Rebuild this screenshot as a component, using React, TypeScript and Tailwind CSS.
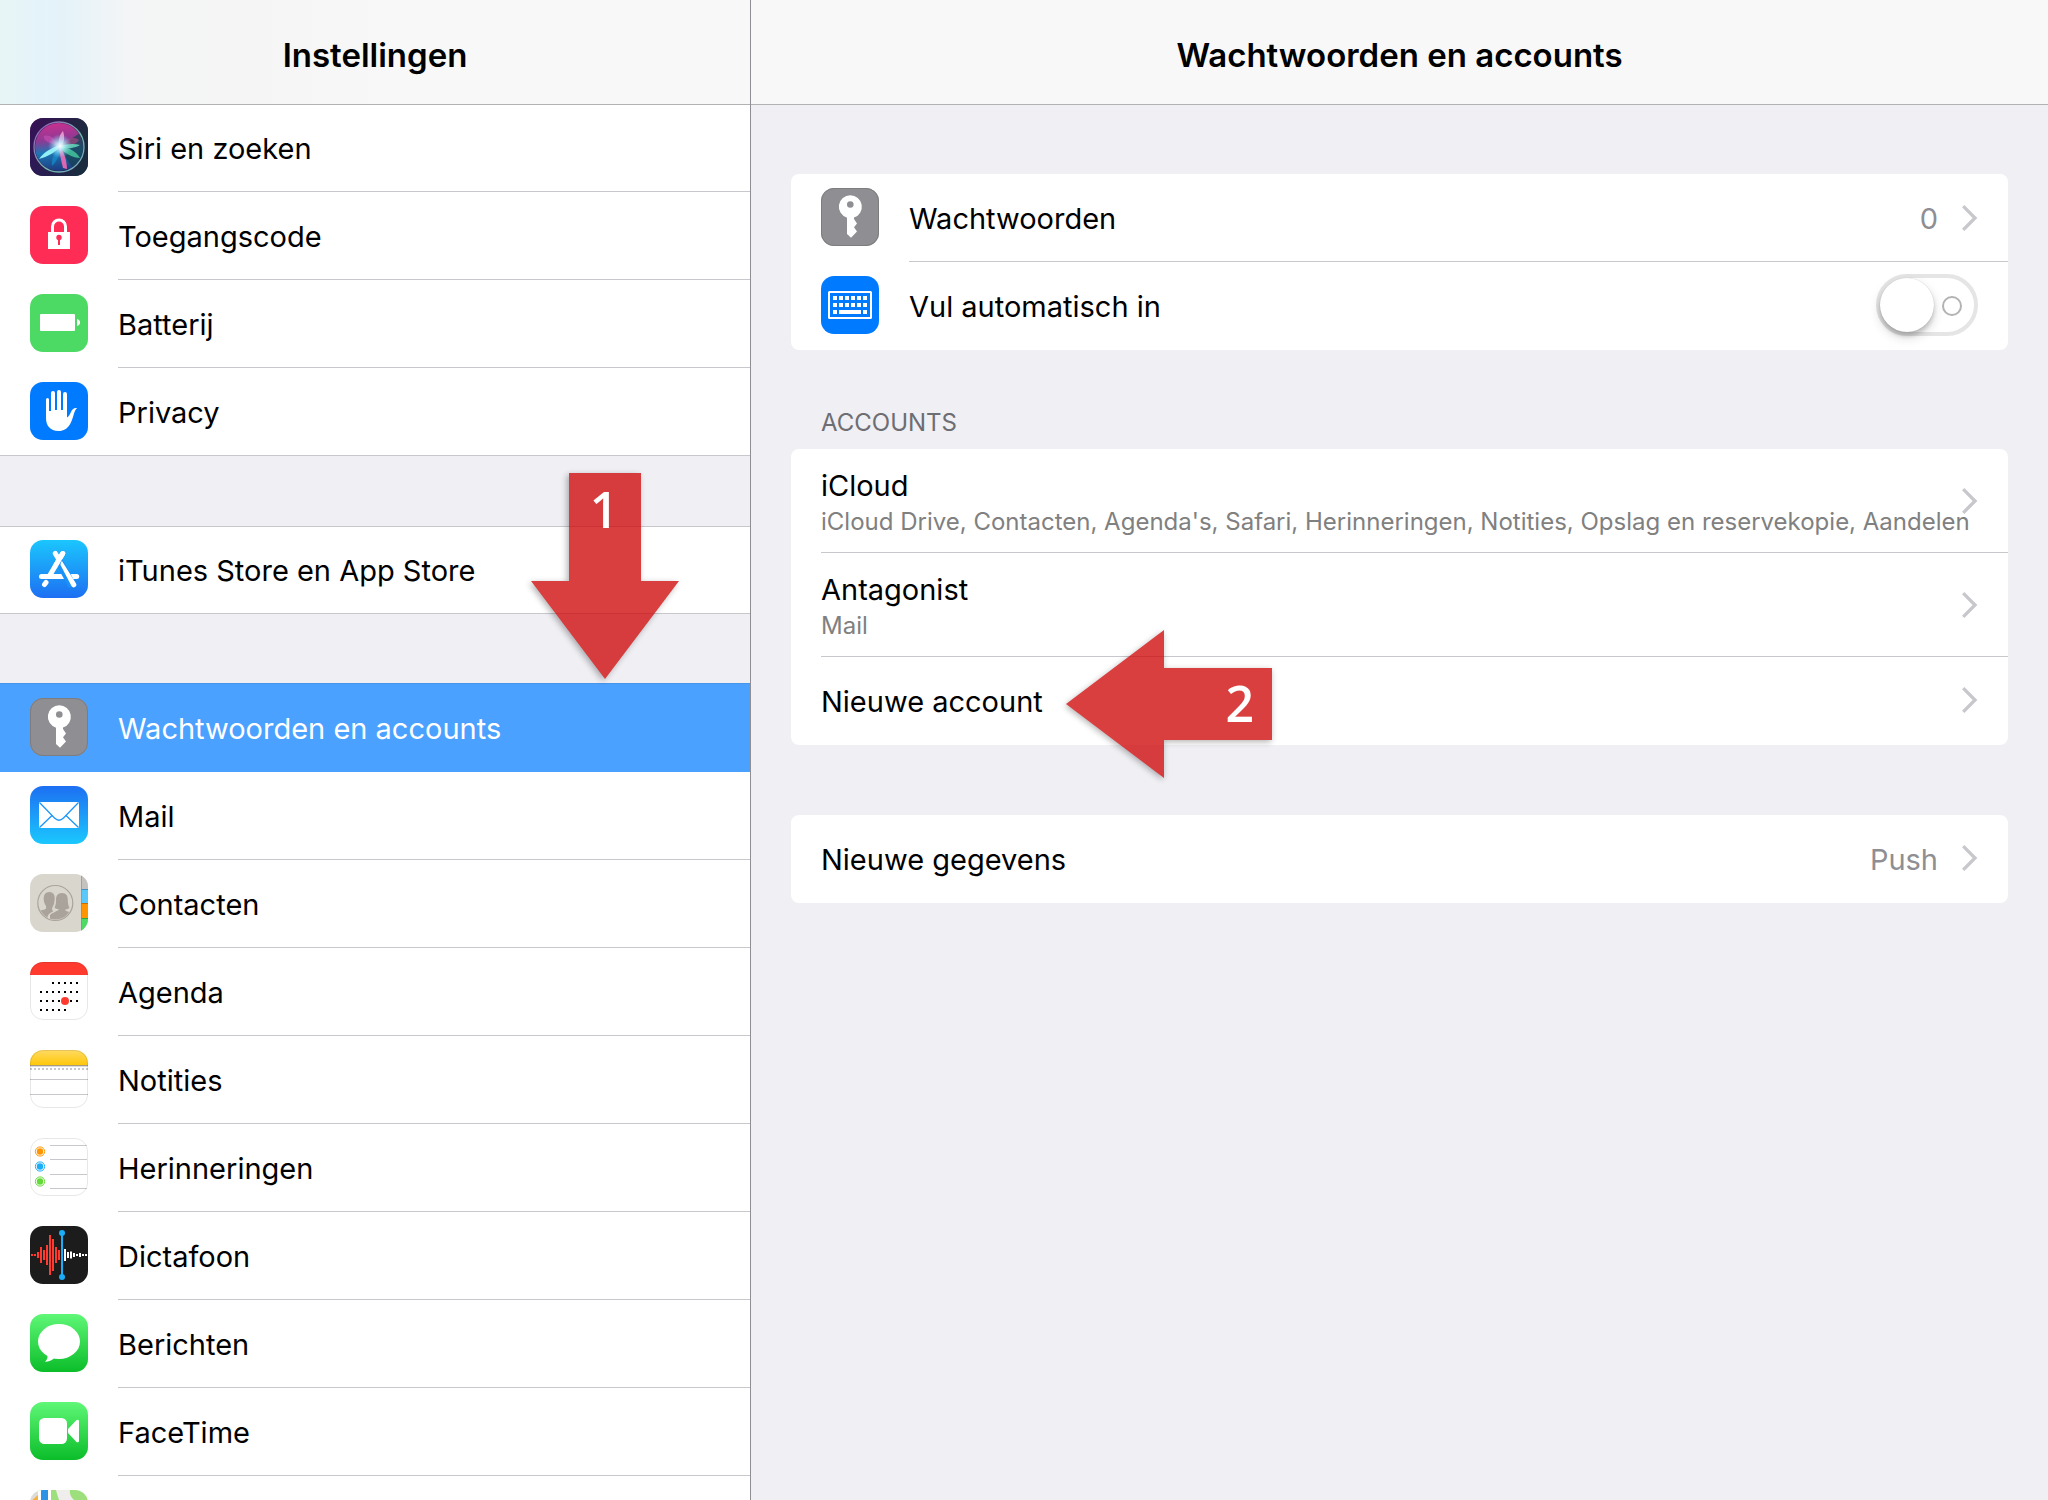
import { useId, useState } from "react";
import type { ReactNode } from "react";

interface TileProps {
  from: string;
  to?: string;
  outline?: string;
  children?: ReactNode;
}

// Rounded 58px app tile, everything drawn inside is clipped to its corners
const Tile: React.FC<TileProps> = ({ from, to = from, outline, children }) => {
  const id = useId();

  return (
    <svg viewBox="0 0 58 58" className="size-[58px] shrink-0" aria-hidden="true">
      <defs>
        <linearGradient id={`${id}-bg`} x1="0" y1="0" x2="0" y2="1">
          <stop offset="0" stopColor={from} />
          <stop offset="1" stopColor={to} />
        </linearGradient>
        <clipPath id={`${id}-clip`}>
          <rect width="58" height="58" rx="13" />
        </clipPath>
      </defs>
      <g clipPath={`url(#${id}-clip)`}>
        <rect width="58" height="58" fill={`url(#${id}-bg)`} />
        {children}
      </g>
      {outline && (
        <rect x="0.5" y="0.5" width="57" height="57" rx="12.5" fill="none" stroke={outline} />
      )}
    </svg>
  );
};

const SiriIcon = () => (
  <Tile from="#2f1547" to="#152a55">
    <defs>
      <linearGradient id="siri-shade" x1="0" y1="0" x2="1" y2="0.2">
        <stop offset="0" stopColor="#3b0f5c" stopOpacity="0.7" />
        <stop offset="1" stopColor="#1a2c3c" stopOpacity="0.9" />
      </linearGradient>
      <linearGradient id="siri-orb" x1="0.4" y1="0" x2="0.5" y2="1">
        <stop offset="0" stopColor="#c8308f" />
        <stop offset="0.35" stopColor="#8d3a94" />
        <stop offset="0.6" stopColor="#1c76b4" />
        <stop offset="1" stopColor="#1d3a80" />
      </linearGradient>
      <radialGradient id="siri-glow">
        <stop offset="0" stopColor="#fff" />
        <stop offset="0.3" stopColor="#c9f4ff" stopOpacity="0.85" />
        <stop offset="1" stopColor="#7fd6f5" stopOpacity="0" />
      </radialGradient>
      <linearGradient id="siri-ring" x1="0" y1="0" x2="1" y2="1">
        <stop offset="0" stopColor="#a04fc0" />
        <stop offset="0.6" stopColor="#6fb9a9" />
        <stop offset="1" stopColor="#7c9fc9" />
      </linearGradient>
    </defs>
    <rect width="58" height="58" fill="url(#siri-shade)" />
    <circle cx="29" cy="29" r="24" fill="url(#siri-orb)" />
    <path d="M29 29 50 15A24 24 0 0 1 42 49Z" fill="#173f4c" opacity="0.7" />
    <path d="M29 29C20 24 13 24 14 18c6-2 12 3 15 11Z" fill="#c04fb0" opacity="0.7" />
    <path d="M29 29c-1-8 1-13 4-16 2 6 1 11-1 16Z" fill="#ffb3df" opacity="0.75" />
    <path d="M30 28c7-8 14-10 19-6-3 5-11 7-19 6Z" fill="#b04a86" opacity="0.6" />
    <path d="M29 28c8-2 15-3 21-1-4 3-13 4-21 3Z" fill="#6cf0c5" opacity="0.75" />
    <path d="M29 28c9 1 17 5 21 12-7 0-15-5-21-10Z" fill="#49d6a2" opacity="0.75" />
    <path d="M30 27C21 30 14 34 9 41c8-2 17-7 22-13Z" fill="#8ff0f5" />
    <path d="M29 29c-5 6-8 12-7 19 5-4 8-12 8-19Z" fill="#1596d2" opacity="0.6" />
    <path d="M28 28c2 7 3 15 5 22l4 1c0-8-3-17-7-23Z" fill="#f26ab4" opacity="0.9" />
    <circle cx="30" cy="28" r="12" fill="url(#siri-glow)" />
    <circle cx="29" cy="29" r="25" fill="none" stroke="url(#siri-ring)" strokeWidth="1.3" />
  </Tile>
);

const LockIcon = () => (
  <Tile from="#ff2d55">
    <path d="M22.5 27v-6.5a6.5 6.5 0 0 1 13 0V27" fill="none" stroke="#fff" strokeWidth="3" />
    <rect x="18" y="26" width="22" height="17" fill="#fff" />
    <circle cx="29" cy="31.5" r="2.7" fill="#ff2d55" />
    <rect x="28" y="32" width="2" height="7" fill="#ff2d55" />
  </Tile>
);

const BatteryIcon = () => (
  <Tile from="#4cd964">
    <rect x="10" y="20" width="35" height="17" rx="1" fill="#fff" />
    <path d="M47 25c4 .5 4 6.500 0 7Z" fill="#fff" />
  </Tile>
);

const HandIcon = () => (
  <Tile from="#007aff">
    <path
      d="M16 17.500a1.500 1.500 0 0 1 3 0V29h2V11a2 2 0 0 1 4 0v17h2V10a2 2 0 0 1 4 0v18h2V12a2 2 0 0 1 4 0v23.500c1.500-1 2.500-2.500 3.500-4.500 1.500-3.500 3.500-5.300 6.500-4.800-1.600 1-2.400 3.300-3.300 6.300C42 38.500 39.500 49 28.500 49 20 49 16 43.500 16 36Z"
      fill="#fff"
    />
  </Tile>
);

const AppStoreIcon = () => (
  <Tile from="#1bc6fd" to="#1d6ff2">
    <g fill="none" stroke="#fff" strokeWidth="5" strokeLinecap="round">
      <path d="M25.300 13.500 28 18" />
      <path d="M32.700 13.500 20 35" />
      <path d="M11.500 36.500H33" />
      <path d="M42 36.500h4.700" />
      <path d="M16 42.500 14.500 44.500" />
    </g>
    <path d="M28.500 20.500 42.500 46" stroke="#1b90f8" strokeWidth="8" />
    <path d="M32.700 13.500 25.500 25.700" stroke="#fff" strokeWidth="5" strokeLinecap="round" />
    <path d="M30.500 25c0-2 .5-3 1.500-4l14 22.500a2.600 2.600 0 0 1-4.500 2.600Z" fill="#fff" />
  </Tile>
);

const KeyIcon = () => (
  <Tile from="#8e8e93" outline="#7d7d80">
    <path
      d="M29.300 7.200a11.500 11.500 0 0 1 3.700 22.400V31l3 4.500-3 3.700 3 4.300-6 6.200-4-3.700V29.700a11.500 11.500 0 0 1 3.300-22.500Zm0 6a3.300 3.300 0 1 0 0 6.600 3.300 3.300 0 0 0 0-6.600Z"
      fill="#fff"
    />
  </Tile>
);

const MailIcon = () => (
  <Tile from="#1d6ff2" to="#1bc8fe">
    <rect x="9" y="16" width="40" height="26" rx="1" fill="#fff" />
    <g fill="none" stroke="#1d96f8" strokeWidth="1.300">
      <path d="M9.500 16.500 24.500 32c3 3 6 3 9 0l15-15.500" />
      <path d="M9.500 41.500 22 29.500M48.500 41.500 36 29.500" />
    </g>
  </Tile>
);

const ContactsIcon = () => (
  <Tile from="#d9d6cd">
    <rect x="51" width="7" height="15" fill="#c3c2c0" />
    <rect x="51" y="15" width="7" height="14" fill="#5ac8fa" />
    <rect x="51" y="29" width="7" height="15" fill="#ff9500" />
    <rect x="51" y="44" width="7" height="14" fill="#4cd964" />
    <path d="M51 15.500h7" stroke="#3a93c4" />
    <path d="M51 29.500h7" stroke="#c26f0a" />
    <path d="M51 44.500h7" stroke="#2fa545" />
    <path d="M51.500 0v58" stroke="#8d8a84" strokeOpacity="0.6" />
    <clipPath id="contacts-disc">
      <circle cx="25.300" cy="29" r="16.500" />
    </clipPath>
    <g clipPath="url(#contacts-disc)" fill="#aaa39c">
      <path d="M32 19c4.500 0 5.800 3 5.800 7 0 3.500.7 6 1.700 8-1 .8-2.700 1.200-4 1.300v1.200c1.500 1.300 6 1 7 3.500V48H20v-7c1-3.500 7-3.500 8.500-5v-1c-1.500 0-3-.5-4-1.300 1-2 1.500-4.500 1.500-7.700 0-4 1.500-7 6-7Z" />
      <path
        d="M19.300 17.500c4.500 0 6.200 3 6 7.500 0 4-1.300 7-2.500 9-.3 2 .2 3 1.700 3.500-3 1.200-6.500 2.500-6.500 6V50H5V38c2-2.500 8-2 10.300-3.500.4-1 .3-2-.3-3-1.300-2-2-4-2-6.500 0-4.500 2-7.500 6.300-7.500Z"
        stroke="#d9d6cd"
        strokeWidth="1.200"
      />
    </g>
    <circle cx="25.300" cy="29" r="17.500" fill="none" stroke="#aaa39c" strokeWidth="1.200" />
  </Tile>
);

// First x and number of days for every week
const calendarRows = [
  { y: 20, start: 22, count: 5 },
  { y: 29, start: 10, count: 7 },
  { y: 38, start: 10, count: 7 },
  { y: 47, start: 10, count: 5 },
];

const CalendarIcon = () => (
  <Tile from="#ffffff" outline="#00000018">
    <rect width="58" height="13" fill="#ff3b30" />
    {calendarRows.map((row) =>
      Array.from({ length: row.count }, (_, i) => (
        <rect key={`${row.y}-${i}`} x={row.start + i * 6} y={row.y} width="2" height="2" />
      ))
    )}
    <circle cx="35" cy="39" r="4" fill="#ff3b30" />
  </Tile>
);

const NotesIcon = () => (
  <Tile from="#ffffff" outline="#00000018">
    <defs>
      <linearGradient id="notes-top" x1="0" y1="0" x2="0" y2="1">
        <stop offset="0" stopColor="#ffda63" />
        <stop offset="1" stopColor="#ffc80a" />
      </linearGradient>
    </defs>
    <rect width="58" height="15" fill="url(#notes-top)" />
    <rect y="15" width="58" height="1" fill="#a89c7c" />
    <rect y="16" width="58" height="1" fill="#dcdcdc" />
    <path d="M0 19h58" stroke="#c8c8c8" strokeWidth="2" strokeDasharray="2 2" />
    <path d="M0 29.500h58M0 44.500h58" stroke="#c7c7cc" />
  </Tile>
);

const RemindersIcon = () => (
  <Tile from="#ffffff" outline="#00000018">
    <path d="M20 7.500h37M20 21.500h37M20 36.500h37M20 50.500h37" stroke="#c7c7cc" />
    {[
      { y: 13.5, color: "#ff9500" },
      { y: 28.5, color: "#1badf8" },
      { y: 43.5, color: "#63da38" },
    ].map((dot) => (
      <g key={dot.y}>
        <circle cx="10" cy={dot.y} r="3.200" fill={dot.color} />
        <circle cx="10" cy={dot.y} r="4.600" fill="none" stroke={dot.color} />
      </g>
    ))}
  </Tile>
);

const redBars = [2, 2, 6, 16, 10, 20, 40, 32, 16, 10];
const whiteBars = [12, 6, 7, 4, 2, 4, 2, 2];

const VoiceMemosIcon = () => (
  <Tile from="#1c1c1c">
    {redBars.map((h, i) => (
      <rect key={i} x={1 + i * 3} y={29 - h / 2} width="2" height={h} fill="#ff3b30" />
    ))}
    {whiteBars.map((h, i) => (
      <rect key={i} x={34 + i * 3} y={29 - h / 2} width="2" height={h} fill="#fff" />
    ))}
    <rect x="31" y="7" width="2" height="44" fill="#1badf8" />
    <circle cx="32" cy="7" r="3" fill="#1badf8" />
    <circle cx="32" cy="51" r="3" fill="#1badf8" />
  </Tile>
);

const MessagesIcon = () => (
  <Tile from="#5ff777" to="#0bbd29">
    <ellipse cx="29" cy="27.500" rx="21" ry="17.500" fill="#fff" />
    <path d="M17.500 41c.5 3-1 5.500-2.500 6.700 4 0 7-1.500 9.500-4Z" fill="#fff" />
  </Tile>
);

const FaceTimeIcon = () => (
  <Tile from="#5ff777" to="#0bbd29">
    <rect x="9" y="16" width="28" height="26" rx="5.500" fill="#fff" />
    <path
      d="M38.500 26.500 46 18.500c1.500-1.500 3-1 3 1v19c0 2-1.500 2.500-3 1l-7.500-8c-.7-1-.7-4 0-5Z"
      fill="#fff"
    />
  </Tile>
);

const MapsIcon = () => (
  <Tile from="#9ddf7c">
    <rect width="21" height="58" fill="#fff" />
    <rect width="8" height="58" fill="#dedcda" />
    <path d="M0 12 8 5v6l-8 7Z" fill="#f6b23c" />
    <rect x="11" width="7" height="58" fill="#2f93e5" />
    <path d="M26 0h14c-1 6 3 9 6 12H30c-2-4-3-8-4-12Z" fill="#f0eeec" />
  </Tile>
);

const KeyboardIcon = () => (
  <Tile from="#007aff">
    <rect x="8" y="16" width="42" height="26" rx="0.500" fill="none" stroke="#fff" strokeWidth="2" />
    <g fill="#fff">
      {[20, 27].map((y) =>
        [12, 18, 24, 30, 36, 42].map((x) => (
          <rect key={`${x}-${y}`} x={x} y={y} width="4" height="4" />
        ))
      )}
      <rect x="12" y="34" width="4" height="4" />
      <rect x="18" y="34" width="22" height="4" />
      <rect x="42" y="34" width="4" height="4" />
    </g>
  </Tile>
);

const Chevron = () => (
  <svg viewBox="0 0 16 26" className="h-[26px] w-4 shrink-0" aria-hidden="true">
    <path d="M1.200 1.200 13 13 1.200 24.800" fill="none" stroke="#c7c7cc" strokeWidth="3.300" />
  </svg>
);

interface MenuItem {
  label: string;
  icon: React.FC;
}

const generalItems: MenuItem[] = [
  { label: "Siri en zoeken", icon: SiriIcon },
  { label: "Toegangscode", icon: LockIcon },
  { label: "Batterij", icon: BatteryIcon },
  { label: "Privacy", icon: HandIcon },
];

const storeItems: MenuItem[] = [{ label: "iTunes Store en App Store", icon: AppStoreIcon }];

const appItems: MenuItem[] = [
  { label: "Wachtwoorden en accounts", icon: KeyIcon },
  { label: "Mail", icon: MailIcon },
  { label: "Contacten", icon: ContactsIcon },
  { label: "Agenda", icon: CalendarIcon },
  { label: "Notities", icon: NotesIcon },
  { label: "Herinneringen", icon: RemindersIcon },
  { label: "Dictafoon", icon: VoiceMemosIcon },
  { label: "Berichten", icon: MessagesIcon },
  { label: "FaceTime", icon: FaceTimeIcon },
  { label: "Kaarten", icon: MapsIcon },
];

interface MenuGroupProps {
  items: MenuItem[];
  selected: string;
  onSelect: (label: string) => void;
}

const MenuGroup: React.FC<MenuGroupProps> = ({ items, selected, onSelect }) => (
  <ul className="bg-white shadow-[inset_0_1px_0_#c8c7cc,inset_0_-1px_0_#c8c7cc]">
    {items.map((item, index) => {
      const active = item.label === selected;
      const last = index === items.length - 1;
      return (
        <li key={item.label}>
          <button
            type="button"
            onClick={() => onSelect(item.label)}
            className={`flex h-[88px] w-full gap-[30px] pl-[30px] text-left ${
              active ? "bg-[#4ba1ff] text-white shadow-[0_-1px_0_#4595ea]" : "text-black"
            }`}
          >
            <span className="pt-3.5">
              <item.icon />
            </span>
            <span
              className={`flex flex-1 items-center border-b pt-0.5 ${
                active || last ? "border-transparent" : "border-[#c8c7cc]"
              }`}
            >
              {item.label}
            </span>
          </button>
        </li>
      );
    })}
  </ul>
);

const DownArrow = () => (
  <div className="pointer-events-none absolute -top-[53px] left-[531px] z-20 flex w-[148px] justify-center">
    <svg viewBox="0 0 148 206" className="absolute top-0 left-0 w-[148px] overflow-visible opacity-75" aria-hidden="true">
      <path
        d="M38 0h72v108h38L74 206 0 108h38Z"
        fill="#ce0000"
        className="drop-shadow-[-2px_2px_3px_rgba(0,0,0,0.4)]"
      />
    </svg>
    <span className="relative pt-0.5 pr-0.5 font-['Open_Sans',sans-serif] text-[50px] leading-[68px] font-semibold text-white">
      1
    </span>
  </div>
);

const LeftArrow = () => (
  <div className="pointer-events-none absolute -top-[27px] left-[275px] z-20 flex h-[148px] w-[206px] items-center justify-end">
    <svg viewBox="0 0 206 148" className="absolute top-0 left-0 w-[206px] overflow-visible opacity-75" aria-hidden="true">
      <path
        d="M206 38v72H98v38L0 74 98 0v38Z"
        fill="#ce0000"
        className="drop-shadow-[-1px_2px_3px_rgba(0,0,0,0.4)]"
      />
    </svg>
    <span className="relative pr-[18px] pb-0.5 font-['Open_Sans',sans-serif] text-[50px] leading-[68px] font-semibold text-white">
      2
    </span>
  </div>
);

const App: React.FC = () => {
  const [selected, setSelected] = useState("Wachtwoorden en accounts");
  const [autofill, setAutofill] = useState(false);

  return (
    <div className="grid h-screen grid-cols-[minmax(0,751fr)_minmax(0,1297fr)] overflow-hidden bg-[#efeff4] font-['Inter','Liberation_Sans',sans-serif] text-[29px] leading-9 text-black">
      {/* Sidebar */}
      <nav className="min-h-0 border-r border-[#8e8e93]" aria-label="Instellingen">
        <header className="relative z-10 flex h-26 items-center justify-center bg-[linear-gradient(90deg,#e7f5f5_0px,#e4f3fa_40px,#e6f3f9_70px,#f3f5f6_125px,#f5f5f5_240px,#f8f8f8_400px)] pt-1.5 shadow-[0_1px_0_#b2b2b2]">
          <h1 className="text-[33px] font-semibold">Instellingen</h1>
        </header>
        <div className="flex flex-col gap-[70px]">
          <MenuGroup items={generalItems} selected={selected} onSelect={setSelected} />
          <div className="relative">
            <MenuGroup items={storeItems} selected={selected} onSelect={setSelected} />
            <DownArrow />
          </div>
          <MenuGroup items={appItems} selected={selected} onSelect={setSelected} />
        </div>
      </nav>

      {/* Detail pane */}
      <main className="min-h-0">
        <header className="flex h-26 items-center justify-center bg-[#f8f8f8] pt-1.5 shadow-[0_1px_0_#b2b2b2]">
          <h2 className="text-[33px] font-semibold">Wachtwoorden en accounts</h2>
        </header>

        <div className="px-10 pt-[70px]">
          <section className="rounded-lg bg-white">
            <button type="button" className="flex h-[88px] w-full gap-[30px] pl-[30px] text-left">
              <span className="pt-3.5">
                <KeyIcon />
              </span>
              <span className="flex flex-1 items-center border-b border-[#c8c7cc] pr-[30px]">
                <span className="flex-1 pt-0.5">Wachtwoorden</span>
                <span className="pt-0.5 pr-6 text-[#8e8e93]">0</span>
                <Chevron />
              </span>
            </button>
            <div className="flex h-[88px] gap-[30px] pr-[30px] pl-[30px]">
              <span className="pt-3.5">
                <KeyboardIcon />
              </span>
              <label htmlFor="autofill" className="flex flex-1 items-center pt-0.5">
                Vul automatisch in
              </label>
              <span className="relative mt-3 h-[62px] w-[102px] shrink-0">
                <input
                  id="autofill"
                  type="checkbox"
                  role="switch"
                  checked={autofill}
                  onChange={(e) => setAutofill(e.target.checked)}
                  className="peer size-full appearance-none rounded-full border-4 border-[#e5e5e5] bg-white checked:border-[#4cd964] checked:bg-[#4cd964]"
                />
                <span className="pointer-events-none absolute top-[22px] right-4 size-5 rounded-full border-2 border-[#b3b3b3] peer-checked:hidden" />
                <span className="pointer-events-none absolute top-1 left-1 size-[54px] rounded-full bg-white shadow-[0_5px_12px_rgba(0,0,0,0.16),0_4px_4px_rgba(0,0,0,0.16),0_0_1px_rgba(0,0,0,0.2)] peer-checked:left-11" />
              </span>
            </div>
          </section>

          <h3 className="px-[30px] pt-[55px] pb-2 text-2xl leading-9 text-[#6d6d72]">ACCOUNTS</h3>
          <section className="rounded-lg bg-white pl-[30px]">
            <button
              type="button"
              className="flex h-26 w-full items-center border-b border-[#c8c7cc] pr-[30px] text-left"
            >
              <span className="min-w-0 flex-1 pt-1.5 whitespace-nowrap">
                <span className="block">iCloud</span>
                <span className="block text-2xl leading-9 text-[#808080]">
                  iCloud Drive, Contacten, Agenda's, Safari, Herinneringen, Notities, Opslag en
                  reservekopie, Aandelen
                </span>
              </span>
              <Chevron />
            </button>
            <button
              type="button"
              className="flex h-26 w-full items-center border-b border-[#c8c7cc] pr-[30px] text-left"
            >
              <span className="min-w-0 flex-1 pt-1.5 whitespace-nowrap">
                <span className="block">Antagonist</span>
                <span className="block text-2xl leading-9 text-[#808080]">Mail</span>
              </span>
              <Chevron />
            </button>
            <div className="relative -ml-[30px] pl-[30px]">
              <button
                type="button"
                className="flex h-[88px] w-full items-center pr-[30px] pb-0.5 text-left"
              >
                <span className="flex-1 pt-1">Nieuwe account</span>
                <Chevron />
              </button>
              <LeftArrow />
            </div>
          </section>

          <section className="mt-[70px] rounded-lg bg-white">
            <button
              type="button"
              className="flex h-[88px] w-full items-center pr-[30px] pb-0.5 pl-[30px] text-left"
            >
              <span className="flex-1 pt-1">Nieuwe gegevens</span>
              <span className="pt-1 pr-6 text-[#8e8e93]">Push</span>
              <Chevron />
            </button>
          </section>
        </div>
      </main>
    </div>
  );
};

export default App;
